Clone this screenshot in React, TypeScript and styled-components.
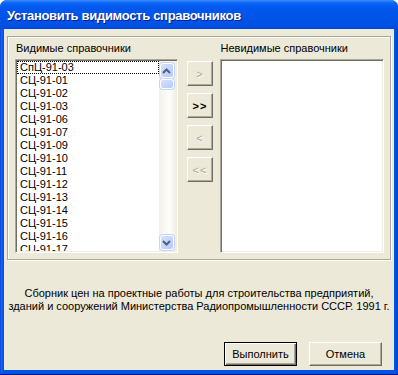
import * as React from 'react'
import styled, { createGlobalStyle } from 'styled-components'

const Global = createGlobalStyle`
  html, body {
    margin: 0;
    padding: 0;
    background: #ffffff;
  }
  body {
    font-family: "Liberation Sans", Arial, sans-serif;
  }
`

const Window = styled.div`
  width: 398px;
  height: 375px;
  display: flex;
  flex-direction: column;
  border-radius: 7px 7px 0 0;
  overflow: hidden;
  background: linear-gradient(to right, #0831d9 0, #166aee 1px, #0055e5 3px, #0055e5 calc(100% - 3px), #0042c6 100%);
  box-shadow: inset 0 -1px 0 #00138c;
`

const TitleBar = styled.div`
  height: 29px;
  flex: 0 0 29px;
  display: flex;
  align-items: center;
  padding-left: 7px;
  padding-top: 1px;
  box-sizing: border-box;
  background: linear-gradient(
    to bottom,
    #3c8fff 0,
    #0a64f2 3px,
    #0058ee 8px,
    #0054e8 16px,
    #0051e6 24px,
    #0048d8 29px
  );
  color: #ffffff;
  font-family: "Liberation Sans", Arial, sans-serif;
  font-weight: bold;
  font-size: 13px;
  text-shadow: 1px 1px 0 #0a1e8c;
  letter-spacing: -0.3px;
`

const Body = styled.div`
  flex: 1;
  margin: 0 4px 5px 4px;
  background: #ece9d8;
  display: flex;
  flex-direction: column;
  padding: 7px 3px 4px 3px;
  font-family: "Liberation Sans", Arial, sans-serif;
  font-size: 11px;
  color: #000000;
`

const GroupBox = styled.div`
  display: flex;
  height: 224px;
  box-sizing: border-box;
  border: 1px solid #aca899;
  box-shadow: inset 1px 1px 0 #ffffff, 1px 1px 0 #ffffff;
  padding: 4px 6px 6px 7px;
`

const ListColumn = styled.div<{ $w: number }>`
  width: ${(p) => p.$w}px;
  display: flex;
  flex-direction: column;
`

const Caption = styled.div`
  height: 14px;
  line-height: 14px;
  margin-bottom: 4px;
  padding-left: 1px;
  white-space: nowrap;
`

const ListBox = styled.div`
  height: 194px;
  box-sizing: border-box;
  background: #ffffff;
  border-style: solid;
  border-width: 1px;
  border-color: #aca899 #ffffff #ffffff #aca899;
  box-shadow: inset 1px 1px 0 #716f64, inset -1px -1px 0 #f1efe2;
  padding: 1px;
  display: flex;
`

const Items = styled.div`
  flex: 1;
  overflow: hidden;
`

const Item = styled.div<{ $focus?: boolean }>`
  height: 13px;
  line-height: 13px;
  box-sizing: border-box;
  padding-left: 2px;
  border: 1px dotted ${(p) => (p.$focus ? '#000000' : 'transparent')};
  white-space: nowrap;
  display: flex;
  align-items: center;
`

const ScrollTrack = styled.div`
  width: 17px;
  display: flex;
  flex-direction: column;
  padding: 1px 1px 1px 0;
  background: linear-gradient(to right, #f3f1ec, #fefefb 60%, #f0eee6);
  box-sizing: border-box;
`

const ScrollPart = styled.div<{ $h: number }>`
  height: ${(p) => p.$h}px;
  box-sizing: border-box;
  border: 1px solid #ffffff;
  border-radius: 3px;
  background: linear-gradient(to bottom right, #d6e2fe, #b6cafa);
  box-shadow: 0 0 0 1px #c3d3fd;
  margin: 1px 1px 0 1px;
  display: flex;
  align-items: center;
  justify-content: center;
`

const Spacer = styled.div`
  flex: 1;
`

const ArrowColumn = styled.div`
  display: flex;
  flex-direction: column;
  gap: 7px;
  margin: 20px 7px 0 9px;
`

const RaisedButton = styled.div<{ $w: number; $h: number; $disabled?: boolean; $default?: boolean }>`
  width: ${(p) => p.$w}px;
  height: ${(p) => p.$h}px;
  box-sizing: border-box;
  background: #ece9d8;
  display: flex;
  align-items: center;
  justify-content: center;
  border-style: solid;
  border-width: 1px;
  border-color: ${(p) => (p.$default ? '#000000' : '#ffffff #716f64 #716f64 #ffffff')};
  box-shadow: ${(p) =>
    p.$default
      ? 'inset 1px 1px 0 #ffffff, inset -1px -1px 0 #716f64, inset -2px -2px 0 #aca899'
      : 'inset -1px -1px 0 #aca899'};
  color: ${(p) => (p.$disabled ? '#aca899' : '#000000')};
  text-shadow: ${(p) => (p.$disabled ? '1px 1px 0 #ffffff' : 'none')};
  font-size: 11px;
  white-space: nowrap;
`

const ArrowLabel = styled.span<{ $bold?: boolean }>`
  font-weight: ${(p) => (p.$bold ? 'bold' : 'normal')};
  letter-spacing: 1px;
  margin-left: 1px;
`

const Description = styled.div`
  margin-top: 27px;
  text-align: center;
  line-height: 13px;
  white-space: nowrap;
`

const ButtonRow = styled.div`
  display: flex;
  justify-content: flex-end;
  gap: 12px;
  margin-top: 29px;
  padding-right: 9px;
`

function Chevron({ up }: { up?: boolean }) {
  return (
    <svg width="9" height="6" viewBox="0 0 9 6">
      <path
        d={up ? 'M1 5 L4.5 1.5 L8 5' : 'M1 1 L4.5 4.5 L8 1'}
        fill="none"
        stroke="#4d6185"
        strokeWidth="2"
      />
    </svg>
  )
}

const visible = [
  'СпЦ-91-03',
  'СЦ-91-01',
  'СЦ-91-02',
  'СЦ-91-03',
  'СЦ-91-06',
  'СЦ-91-07',
  'СЦ-91-09',
  'СЦ-91-10',
  'СЦ-91-11',
  'СЦ-91-12',
  'СЦ-91-13',
  'СЦ-91-14',
  'СЦ-91-15',
  'СЦ-91-16',
  'СЦ-91-17',
]

export default function App() {
  return (
    <>
      <Global />
      <Window>
        <TitleBar>Установить видимость справочников</TitleBar>
        <Body>
          <GroupBox>
            <ListColumn $w={163}>
              <Caption>Видимые справочники</Caption>
              <ListBox>
                <Items>
                  {visible.map((name, i) => (
                    <Item key={name + i} $focus={i === 0}>
                      {name}
                    </Item>
                  ))}
                </Items>
                <ScrollTrack>
                  <ScrollPart $h={15}>
                    <Chevron up />
                  </ScrollPart>
                  <ScrollPart $h={10} />
                  <Spacer />
                  <ScrollPart $h={15}>
                    <Chevron />
                  </ScrollPart>
                </ScrollTrack>
              </ListBox>
            </ListColumn>
            <ArrowColumn>
              <RaisedButton $w={26} $h={25} $disabled>
                <ArrowLabel>&gt;</ArrowLabel>
              </RaisedButton>
              <RaisedButton $w={26} $h={25}>
                <ArrowLabel $bold>&gt;&gt;</ArrowLabel>
              </RaisedButton>
              <RaisedButton $w={26} $h={25} $disabled>
                <ArrowLabel>&lt;</ArrowLabel>
              </RaisedButton>
              <RaisedButton $w={26} $h={25} $disabled>
                <ArrowLabel>&lt;&lt;</ArrowLabel>
              </RaisedButton>
            </ArrowColumn>
            <ListColumn $w={165}>
              <Caption>Невидимые справочники</Caption>
              <ListBox />
            </ListColumn>
          </GroupBox>
          <Description>
            Сборник цен на проектные работы для строительства предприятий,
            <br />
            зданий и сооружений Министерства Радиопромышленности СССР. 1991 г.
          </Description>
          <ButtonRow>
            <RaisedButton $w={73} $h={24} $default>
              Выполнить
            </RaisedButton>
            <RaisedButton $w={73} $h={24}>
              Отмена
            </RaisedButton>
          </ButtonRow>
        </Body>
      </Window>
    </>
  )
}
